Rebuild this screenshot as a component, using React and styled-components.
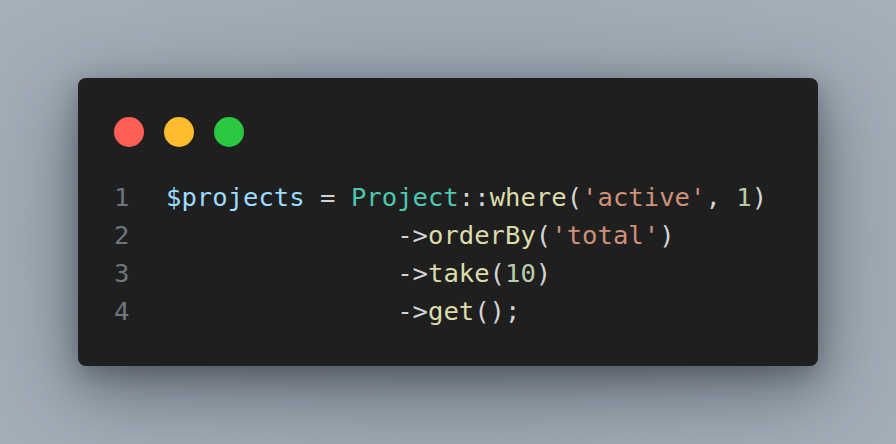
import React from "react";
import styled, { createGlobalStyle } from "styled-components";

const GlobalStyle = createGlobalStyle`
    html, body {
        margin: 0;
        padding: 0;
    }
    body {
        width: 896px;
        height: 444px;
        overflow: hidden;
        background: radial-gradient(ellipse 70% 80% at 50% 55%, #8e98a3 0%, #9ea8b3 55%, #a6b0bb 100%);
    }
`;

const Stage = styled.div`
    height: 444px;
    display: flex;
    justify-content: center;
    padding-top: 78px;
    box-sizing: border-box;
`;

const Window = styled.div`
    width: 740px;
    height: 288px;
    box-sizing: border-box;
    background: #1f1f1f;
    border-radius: 8px;
    padding: 39px 36px 0 36px;
    box-shadow: 0 22px 70px rgba(40, 48, 58, 0.55),
        0 8px 24px rgba(40, 48, 58, 0.35);
`;

const Dots = styled.div`
    display: flex;
    gap: 20px;
    margin-bottom: 31px;
`;

const Dot = styled.span`
    width: 30px;
    height: 30px;
    border-radius: 50%;
    background: ${(p) => p.color};
`;

const Code = styled.div`
    font-family: "DejaVu Sans Mono", "Liberation Mono", monospace;
    font-size: 25.6px;
    line-height: 38px;
    color: #d4d4d4;
`;

const Line = styled.div`
    display: flex;
    white-space: pre;
`;

const LineNo = styled.span`
    width: 52px;
    flex: none;
    color: #6e7681;
`;

const Tok = styled.span`
    color: ${(p) => p.c || "#d4d4d4"};
`;

const VAR = "#9cdcfe";
const CLS = "#4ec9b0";
const FN = "#dcdcaa";
const STR = "#ce9178";
const NUM = "#b5cea8";

const pad = " ".repeat(15);

const App = () => {
    return (
        <>
            <GlobalStyle />
            <Stage>
                <Window>
                    <Dots>
                        <Dot color="#ff5f57" />
                        <Dot color="#febc2e" />
                        <Dot color="#28c840" />
                    </Dots>
                    <Code>
                        <Line>
                            <LineNo>1</LineNo>
                            <Tok c={VAR}>$projects</Tok>
                            <Tok> = </Tok>
                            <Tok c={CLS}>Project</Tok>
                            <Tok>::</Tok>
                            <Tok c={FN}>where</Tok>
                            <Tok>(</Tok>
                            <Tok c={STR}>'active'</Tok>
                            <Tok>, </Tok>
                            <Tok c={NUM}>1</Tok>
                            <Tok>)</Tok>
                        </Line>
                        <Line>
                            <LineNo>2</LineNo>
                            <Tok>{pad}-&gt;</Tok>
                            <Tok c={FN}>orderBy</Tok>
                            <Tok>(</Tok>
                            <Tok c={STR}>'total'</Tok>
                            <Tok>)</Tok>
                        </Line>
                        <Line>
                            <LineNo>3</LineNo>
                            <Tok>{pad}-&gt;</Tok>
                            <Tok c={FN}>take</Tok>
                            <Tok>(</Tok>
                            <Tok c={NUM}>10</Tok>
                            <Tok>)</Tok>
                        </Line>
                        <Line>
                            <LineNo>4</LineNo>
                            <Tok>{pad}-&gt;</Tok>
                            <Tok c={FN}>get</Tok>
                            <Tok>();</Tok>
                        </Line>
                    </Code>
                </Window>
            </Stage>
        </>
    );
};

export default App;
